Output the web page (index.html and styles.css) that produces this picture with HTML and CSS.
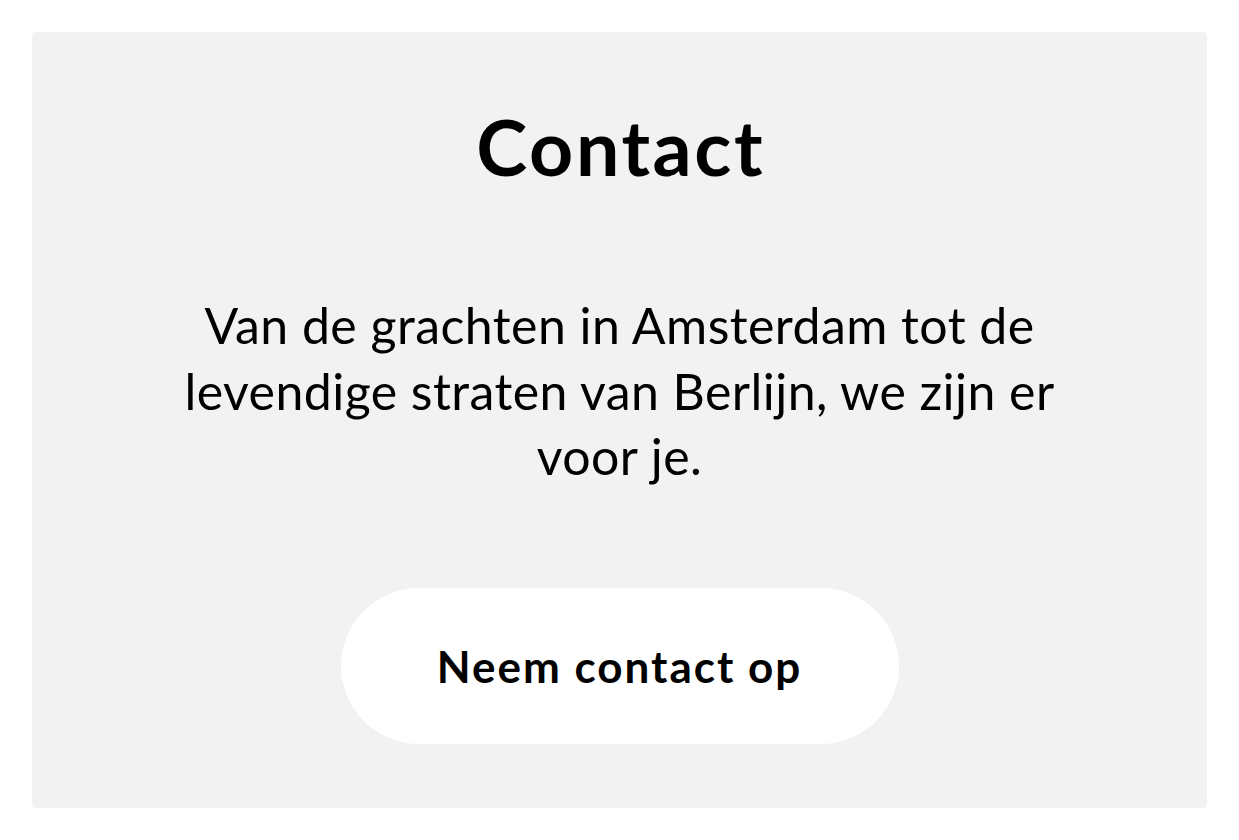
FILE: index.html
```html
<!DOCTYPE html>
<html>
  <head>
    <title>Contact</title>
    <meta charset="utf-8">
    <meta name="viewport" content="width=device-width, initial-scale=1">
    <link rel="stylesheet" href="styles.css">
  </head>
<body>
<div class="card">
  <h1>Contact</h1>
  <p class="lead">Van de grachten in Amsterdam tot de levendige straten van Berlijn, we zijn er voor je.</p>
  <a class="button" href="#">Neem contact op</a>
</div>
</body>
</html>
```

FILE: styles.css
```css
body {
  font-family: "Lato", "Liberation Sans", sans-serif;
  background-color: #fff;
  color: #000;
  padding: 32px;
  margin: 0;
}
.card {
  display: flex;
  flex-direction: column;
  align-items: center;
  height: 776px;
  box-sizing: border-box;
  padding-top: 68px;
  background-color: #f2f2f2;
  border-radius: 4px;
}
h1 {
  font-size: 77px;
  line-height: 92px;
  font-weight: 700;
  letter-spacing: 2.6px;
  padding-left: 2.6px;
  margin: 0;
}
.lead {
  font-size: 50px;
  line-height: 65.5px;
  letter-spacing: 0.45px;
  text-align: center;
  max-width: 880px;
  margin: 101px 0 0;
}
.button {
  display: flex;
  align-items: center;
  justify-content: center;
  width: 558px;
  height: 156px;
  margin-top: 98px;
  border-radius: 78px;
  background-color: #fff;
  color: #000;
  font-size: 44px;
  font-weight: 700;
  letter-spacing: 2px;
  text-decoration: none;
}
```
